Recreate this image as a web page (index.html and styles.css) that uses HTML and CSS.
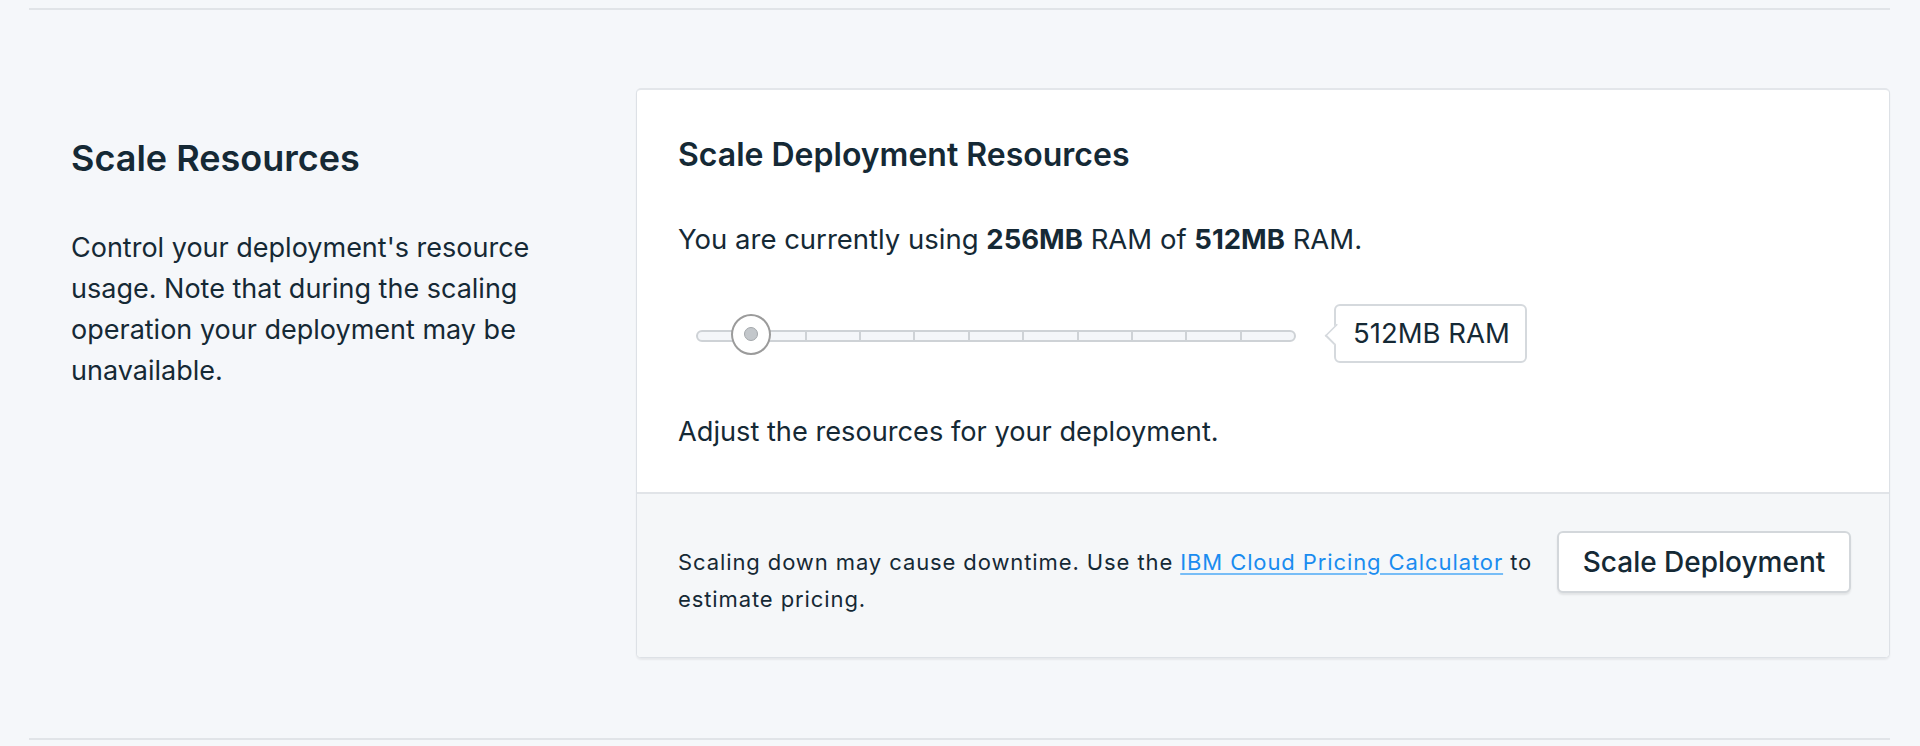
FILE: index.html
```html
<!DOCTYPE html>
<html lang="en">
<head>
<meta charset="utf-8">
<title>Scale Resources</title>
<link rel="stylesheet" href="styles.css">
</head>
<body>
<div class="page">
  <section class="section">
    <div class="intro">
      <h2 class="intro-title">Scale Resources</h2>
      <p class="intro-text">Control your deployment's resource usage. Note that during the scaling operation your deployment may be unavailable.</p>
    </div>
    <div class="card">
      <div class="card-body">
        <h3 class="card-title">Scale Deployment Resources</h3>
        <p class="usage">You are currently using <strong>256MB</strong> RAM of <strong>512MB</strong> RAM.</p>
        <div class="slider-row">
          <div class="slider">
            <div class="track">
              <span class="seg"></span><span class="seg"></span><span class="seg"></span><span class="seg"></span><span class="seg"></span><span class="seg"></span><span class="seg"></span><span class="seg"></span><span class="seg"></span><span class="seg"></span><span class="seg"></span>
            </div>
            <span class="thumb"><span class="thumb-dot"></span></span>
          </div>
          <div class="value-tip">512MB RAM</div>
        </div>
        <p class="hint">Adjust the resources for your deployment.</p>
      </div>
      <div class="card-footer">
        <p class="footer-text">Scaling down may cause downtime. Use the <a class="link" href="#">IBM Cloud Pricing Calculator</a> to<br>estimate pricing.</p>
        <button class="btn" type="button">Scale Deployment</button>
      </div>
    </div>
  </section>
</div>
</body>
</html>
```

FILE: styles.css
```css
* { box-sizing: border-box; }
html, body { margin: 0; padding: 0; }
body {
  background: #f5f7fa;
  color: #152935;
  font-family: Inter, "Noto Sans", "Liberation Sans", sans-serif;
  height: 746px;
  overflow: hidden;
}
.page {
  padding: 8px 30px 0 29px;
}
.section {
  display: flex;
  border-top: 2px solid #e1e4e8;
  border-bottom: 2px solid #e1e4e8;
  padding: 78px 0 80px 0;
}
.intro {
  width: 607px;
  padding: 48px 0 0 42px;
  flex: none;
}
.intro-title {
  margin: 0;
  font-size: 36px;
  line-height: 44px;
  font-weight: 600;
}
.intro-text {
  margin: 47px 0 0 0;
  width: 500px;
  font-size: 27px;
  line-height: 41px;
}
.card {
  flex: 1;
  height: 570px;
  background: #fff;
  border: 1px solid #dde1e6;
  border-top: 2px solid #e3e6ea;
  border-radius: 5px;
  box-shadow: 0 2px 2px rgba(0, 0, 0, 0.06);
  display: flex;
  flex-direction: column;
  overflow: hidden;
}
.card-body {
  padding: 45px 40px 0 41px;
  flex: none;
  height: 402px;
}
.card-title {
  margin: 0;
  font-size: 32px;
  line-height: 40px;
  font-weight: 600;
}
.usage {
  margin: 44px 0 0 0;
  font-size: 27.5px;
  line-height: 40px;
}
.usage strong { font-weight: 700; }
.slider-row {
  display: flex;
  align-items: center;
  margin: 45px 0 0 18px;
  height: 59px;
}
.slider {
  position: relative;
  width: 600px;
  height: 40px;
  display: flex;
  align-items: center;
  margin-top: 4px;
}
.track {
  width: 600px;
  height: 12px;
  border: 2px solid #ced2d6;
  border-radius: 6px;
  background: #f4f6f9;
  display: flex;
}
.seg {
  flex: 1;
  border-right: 2px solid #ced2d6;
}
.seg:last-child { border-right: none; }
.thumb {
  position: absolute;
  left: 35px;
  top: -2px;
  width: 40px;
  height: 41px;
  border-radius: 50%;
  background: #fff;
  border: 2px solid #9b9b9b;
  display: flex;
  align-items: center;
  justify-content: center;
}
.thumb-dot {
  width: 14px;
  height: 14px;
  border-radius: 50%;
  background: #c3c7cb;
  border: 1px solid #a3a7ab;
}
.value-tip {
  position: relative;
  margin-left: 38px;
  height: 59px;
  width: 193px;
  border: 2px solid #d5d9dd;
  border-radius: 6px;
  background: #fff;
  font-size: 27.5px;
  line-height: 55px;
  padding-left: 17px;
  white-space: nowrap;
}
.value-tip::before {
  content: "";
  position: absolute;
  left: -9px;
  top: 50%;
  width: 15px;
  height: 15px;
  margin-top: -8px;
  background: #fff;
  border-left: 2px solid #d5d9dd;
  border-bottom: 2px solid #d5d9dd;
  transform: rotate(45deg) scaleX(0.8);
}
.hint {
  margin: 49px 0 0 0;
  font-size: 27.2px;
  line-height: 40px;
}
.card-footer {
  flex: 1;
  background: #f5f7f9;
  border-top: 2px solid #e1e4e8;
  display: flex;
  align-items: flex-start;
  padding: 37px 38px 0 41px;
  gap: 16px;
}
.footer-text {
  flex: 1;
  margin: 13px 0 0 0;
  font-size: 22px;
  letter-spacing: 0.9px;
  line-height: 37px;
}
.link {
  color: #1a8cf0;
  text-decoration: underline;
  text-decoration-color: #77bdf7;
  text-underline-offset: 3px;
}
.btn {
  flex: none;
  width: 294px;
  height: 62px;
  background: #fff;
  border: 2px solid #d3d7db;
  border-radius: 6px;
  box-shadow: 0 2px 2px rgba(0, 0, 0, 0.08);
  font-family: inherit;
  font-size: 28px;
  font-weight: 500;
  color: #152935;
  padding: 0;
}
```
